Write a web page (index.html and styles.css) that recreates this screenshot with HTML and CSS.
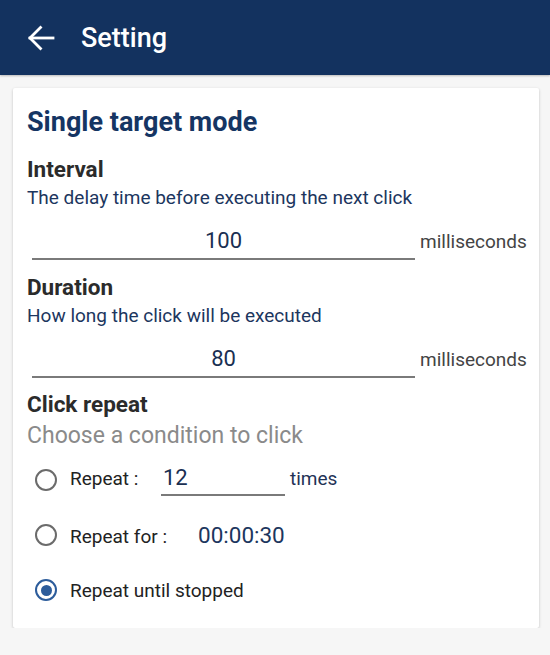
FILE: index.html
```html
<!DOCTYPE html>
<html lang="en">
<head>
    <meta charset="UTF-8">
    <meta name="viewport" content="width=device-width, initial-scale=1.0">
    <title>Setting</title>
    <link rel="stylesheet" href="styles.css">
</head>
<body>
    <header class="topbar">
        <svg class="back" width="28" height="28" viewBox="0 0 28 28" fill="none" stroke="#fff" stroke-width="2.8" stroke-linecap="square">
            <path d="M26 14H3"/>
            <path d="M13.5 3.5L3 14l10.5 10.5"/>
        </svg>
        <h1>Setting</h1>
    </header>

    <main class="page">
        <div class="card">
            <h2 class="card-title">Single target mode</h2>

            <div class="section">
                <h3>Interval</h3>
                <p class="hint">The delay time before executing the next click</p>
                <div class="field-row">
                    <div class="field">100</div>
                    <span class="unit">milliseconds</span>
                </div>
            </div>

            <div class="section">
                <h3>Duration</h3>
                <p class="hint">How long the click will be executed</p>
                <div class="field-row">
                    <div class="field">80</div>
                    <span class="unit">milliseconds</span>
                </div>
            </div>

            <div class="section section-repeat">
                <h3>Click repeat</h3>
                <p class="sub">Choose a condition to click</p>
                <div class="radio-list">
                    <div class="radio-row">
                        <span class="radio"></span>
                        <div class="radio-body">
                            <span class="radio-label label-short">Repeat :</span>
                            <span class="small-field">12</span>
                            <span class="times">times</span>
                        </div>
                    </div>
                    <div class="radio-row">
                        <span class="radio"></span>
                        <div class="radio-body">
                            <span class="radio-label label-long">Repeat for :</span>
                            <span class="time-value">00:00:30</span>
                        </div>
                    </div>
                    <div class="radio-row">
                        <span class="radio checked"></span>
                        <div class="radio-body">
                            <span class="radio-label">Repeat until stopped</span>
                        </div>
                    </div>
                </div>
            </div>
        </div>
    </main>
</body>
</html>
```

FILE: styles.css
```css
body {
    margin: 0;
    background: #f6f6f6;
    font-family: Roboto, "Liberation Sans", sans-serif;
    color: #222;
}
.topbar {
    height: 75px;
    background: #13325f;
    display: flex;
    align-items: center;
    padding-left: 27px;
    gap: 26px;
    box-shadow: 0 1px 2px rgba(0, 0, 0, 0.25);
}
.topbar h1 {
    margin: 0;
    color: #fff;
    font-size: 27px;
    font-weight: 500;
    line-height: 32px;
}
.back {
    display: block;
}
.page {
    padding: 13px 11px 0 13px;
}
.card {
    background: #fff;
    border-radius: 2px;
    box-shadow: 0 1px 3px rgba(0, 0, 0, 0.22);
    padding: 18px 14px 13px 14px;
}
.card-title {
    margin: 0;
    font-size: 27px;
    line-height: 32px;
    font-weight: 700;
    color: #153563;
}
.section {
    margin-top: 14px;
}
.card-title + .section {
    margin-top: 18px;
}
.section-repeat {
    margin-top: 13px;
}
.section h3 {
    margin: 0;
    font-size: 22.5px;
    line-height: 27px;
    font-weight: 700;
    color: #2b2b2b;
}
.hint {
    margin: 3px 0 0;
    font-size: 19px;
    line-height: 23px;
    color: #1c365e;
}
.field-row {
    display: flex;
    align-items: baseline;
    gap: 5px;
    margin: 18px 0 0 5px;
}
.field {
    width: 383px;
    flex-shrink: 0;
    font-size: 22px;
    line-height: 28px;
    text-align: center;
    color: #1a2f52;
    padding-bottom: 3px;
    border-bottom: 2px solid #7a7a7a;
}
.unit {
    font-size: 19px;
    line-height: 23px;
    color: #444;
    white-space: nowrap;
}
.sub {
    margin: 4px 0 0;
    font-size: 23px;
    line-height: 28px;
    color: #8a8a8a;
}
.radio-list {
    display: flex;
    flex-direction: column;
    gap: 5px;
    margin-top: 5px;
}
.radio-row {
    height: 50px;
    display: flex;
    align-items: center;
    padding-left: 8px;
    gap: 13px;
}
.radio {
    width: 22px;
    height: 22px;
    box-sizing: border-box;
    border: 2px solid #6b6b6b;
    border-radius: 50%;
    display: flex;
    align-items: center;
    justify-content: center;
    flex-shrink: 0;
}
.radio.checked {
    border: 2.5px solid #2c5c9b;
}
.radio.checked::after {
    content: "";
    width: 11px;
    height: 11px;
    border-radius: 50%;
    background: #2c5c9b;
}
.radio-body {
    display: flex;
    align-items: baseline;
}
.radio-label {
    font-size: 19px;
    line-height: 23px;
    color: #222;
}
.label-short {
    width: 91px;
}
.label-long {
    width: 128px;
}
.small-field {
    width: 122px;
    padding-left: 2px;
    font-size: 22px;
    line-height: 26px;
    color: #1a2f52;
    padding-bottom: 3px;
    border-bottom: 2px solid #7a7a7a;
}
.times {
    margin-left: 5px;
    font-size: 19px;
    line-height: 23px;
    color: #1f3256;
}
.time-value {
    font-size: 22.5px;
    line-height: 26px;
    color: #1c365e;
}
```
